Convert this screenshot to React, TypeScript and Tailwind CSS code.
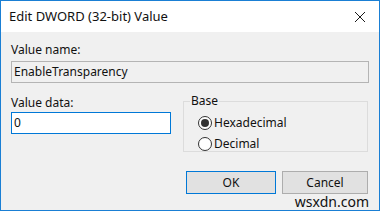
import React from 'react';

const font = { fontFamily: '"Noto Sans", "Open Sans", sans-serif' };

const CloseIcon = () => (
  <svg width="12" height="12" viewBox="0 0 12 12" className="text-[#1a1a1a]">
    <path d="M1 1L11 11M11 1L1 11" stroke="currentColor" strokeWidth="1" />
  </svg>
);

const Radio = ({ checked, label }: { checked?: boolean; label: string }) => (
  <div className="flex items-center h-[21px]">
    <div className="w-[14px] h-[14px] rounded-full border border-[#333333] bg-white flex items-center justify-center">
      {checked && <div className="w-[8px] h-[8px] rounded-full bg-[#333333]" />}
    </div>
    <span className="ml-[2px] leading-[16px]">{label}</span>
  </div>
);

export default function App() {
  return (
    <div
      className="relative w-[380px] h-[211px] border border-[#1a7fd4] bg-[#f0f0f0] flex flex-col text-[12px] text-[#111111]"
      style={font}
    >
      {/* Title bar */}
      <div className="h-[31px] bg-white flex items-center justify-between pl-[8px] pr-[13px] shrink-0">
        <span className="text-[13px] text-[#111111]">Edit DWORD (32-bit) Value</span>
        <CloseIcon />
      </div>

      {/* Body */}
      <div className="flex flex-col px-[10px] pt-[10px]">
        <div className="leading-[16px]">Value name:</div>
        <div className="mt-[3px] h-[22px] border border-[#b4b4b4] bg-[#f0f0f0] flex items-center px-[2px] leading-[16px]">
          EnableTransparency
        </div>

        <div className="flex mt-[10px]">
          <div className="flex flex-col w-[160px] pt-[2px]">
            <div className="leading-[16px]">Value data:</div>
            <div className="mt-[1px] h-[22px] border border-[#0078d7] bg-white flex items-center px-[2px] leading-[16px]">
              0
            </div>
          </div>

          <fieldset className="ml-[12px] flex-1 border border-[#dcdcdc] pl-[6px] h-[59px] mr-[1px]">
            <legend className="px-[1px] leading-[16px]">Base</legend>
            <div className="pl-[8px] pt-[3px]">
              <Radio checked label="Hexadecimal" />
              <Radio label="Decimal" />
            </div>
          </fieldset>
        </div>

        <div className="flex justify-end gap-[6px] mt-[19px] mr-[1px]">
          <button className="w-[90px] h-[23px] border border-[#0078d7] bg-[#e1e1e1] leading-[16px]">OK</button>
          <button className="w-[86px] h-[23px] border border-[#adadad] bg-[#e1e1e1] leading-[16px]">Cancel</button>
        </div>
      </div>

      <span className="absolute right-[10px] bottom-[1px] text-[14px] leading-[15px] text-[#111111]">wsxdn.com</span>
    </div>
  );
}
